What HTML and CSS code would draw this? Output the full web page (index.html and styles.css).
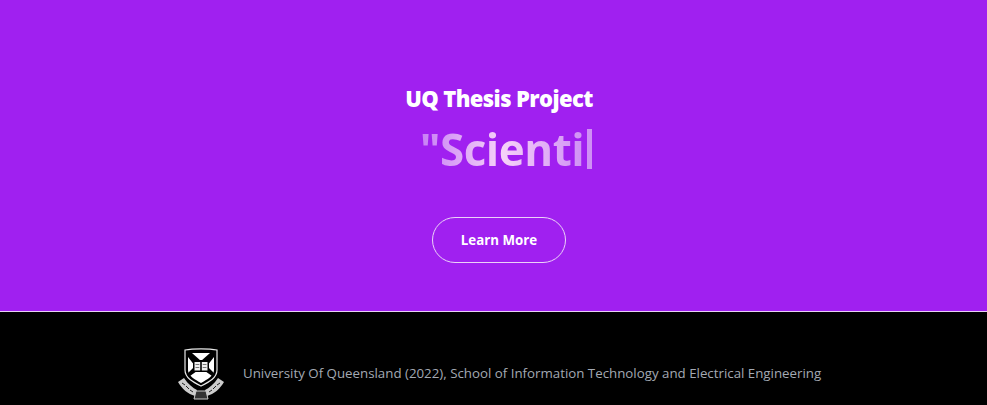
FILE: index.html
```html
<!DOCTYPE html>
<html lang="en">
<head>
    <meta charset="UTF-8">
    <meta name="viewport" content="width=device-width, initial-scale=1.0">
    <title>UQ Thesis Project</title>
    <link rel="stylesheet" href="styles.css">
</head>
<body>
    <section class="hero">
        <h1 class="hero-title">UQ Thesis Project</h1>
        <div class="typed-row">
            <span class="typed-text">"Scienti</span><span class="typed-cursor"></span>
        </div>
        <a class="learn-btn" href="#">Learn More</a>
    </section>
    <footer class="footer">
        <svg class="crest" viewBox="0 0 48 54" width="48" height="54" aria-hidden="true">
            <!-- shield outline and field -->
            <path d="M8 3 C16 1.500 32 1.500 40 3 L40 23 C40 31 32 35 24 39 C16 35 8 31 8 23 Z" fill="#000" stroke="#e8e8e8" stroke-width="1.2"/>
            <path d="M11 6 H37 V23 C37 29 30 32.500 24 36 C18 32.500 11 29 11 23 Z" fill="#fff"/>
            <!-- saltire -->
            <path d="M11 6 L15 6 L24 14 L33 6 L37 6 L37 10 L30 19 L37 26 L35 29 L28 24 H20 L13 29 L11 26 L18 19 L11 10 Z" fill="#000"/>
            <!-- book -->
            <path d="M16 13 H32 V25 H16 Z" fill="#000"/>
            <path d="M17.500 15 H23.200 V23.500 H17.500 Z M24.800 15 H30.500 V23.500 H24.800 Z" fill="#eee"/>
            <path d="M18.500 17.500 H22.300 M18.500 20.500 H22.300 M25.700 17.500 H29.500 M25.700 20.500 H29.500" stroke="#555" stroke-width="0.800"/>
            <!-- motto ribbon -->
            <path d="M1 35 L7 31 C11 37 16 41 20 43 L18 49 C11 47 5 42 1 35 Z" fill="#ccc"/>
            <path d="M47 35 L41 31 C37 37 32 41 28 43 L30 49 C37 47 43 42 47 35 Z" fill="#ccc"/>
            <path d="M19 44 H29 L31 52 H17 Z" fill="#333" stroke="#ccc" stroke-width="1"/>
            <path d="M5 36 L8 38 M9 39 L12 42 M13 43 L16 45 M43 36 L40 38 M39 39 L36 42 M35 43 L32 45" stroke="#222" stroke-width="1"/>
        </svg>
        <p class="footer-text">University Of Queensland (2022), School of Information Technology and Electrical Engineering</p>
    </footer>
</body>
</html>
```

FILE: styles.css
```css
html, body {
    height: 100%;
}
body {
    margin: 0;
    background-color: #000;
    font-family: "Open Sans", "Noto Sans", sans-serif;
    overflow: hidden;
}
.hero {
    height: 311px;
    padding-left: 11px;
    background-color: #a020f0;
    border-bottom: 1px solid #e8d0f5;
    display: flex;
    flex-direction: column;
    align-items: center;
}
.hero-title {
    margin: 83px 0 0;
    color: #fff;
    font-size: 22px;
    line-height: 30px;
    font-weight: 800;
    letter-spacing: -0.6px;
}
.typed-row {
    display: flex;
    align-items: center;
    height: 60px;
    margin: 6px 0 0 14px;
}
.typed-text {
    font-size: 44px;
    font-weight: 700;
    letter-spacing: -0.5px;
    line-height: 60px;
    background: linear-gradient(90deg, #c77ff5 0%, #f6d2f8 50%, #cf90f5 100%);
    -webkit-background-clip: text;
    background-clip: text;
    color: transparent;
}
.typed-cursor {
    width: 5px;
    height: 40px;
    margin-left: 3px;
    background-color: #cf90f5;
}
.learn-btn {
    margin-top: 38px;
    width: 134px;
    height: 46px;
    box-sizing: border-box;
    border: 1px solid #ecd2f8;
    border-radius: 23px;
    color: #fff;
    font-size: 13.3px;
    font-weight: 700;
    text-decoration: none;
    display: flex;
    align-items: center;
    justify-content: center;
}
.footer {
    display: flex;
    align-items: center;
    gap: 18px;
    padding: 35px 0 0 177px;
}
.crest {
    flex: none;
}
.footer-text {
    margin: 0 0 2px;
    color: #a3a9b3;
    font-size: 13.3px;
    line-height: 20px;
}
```
